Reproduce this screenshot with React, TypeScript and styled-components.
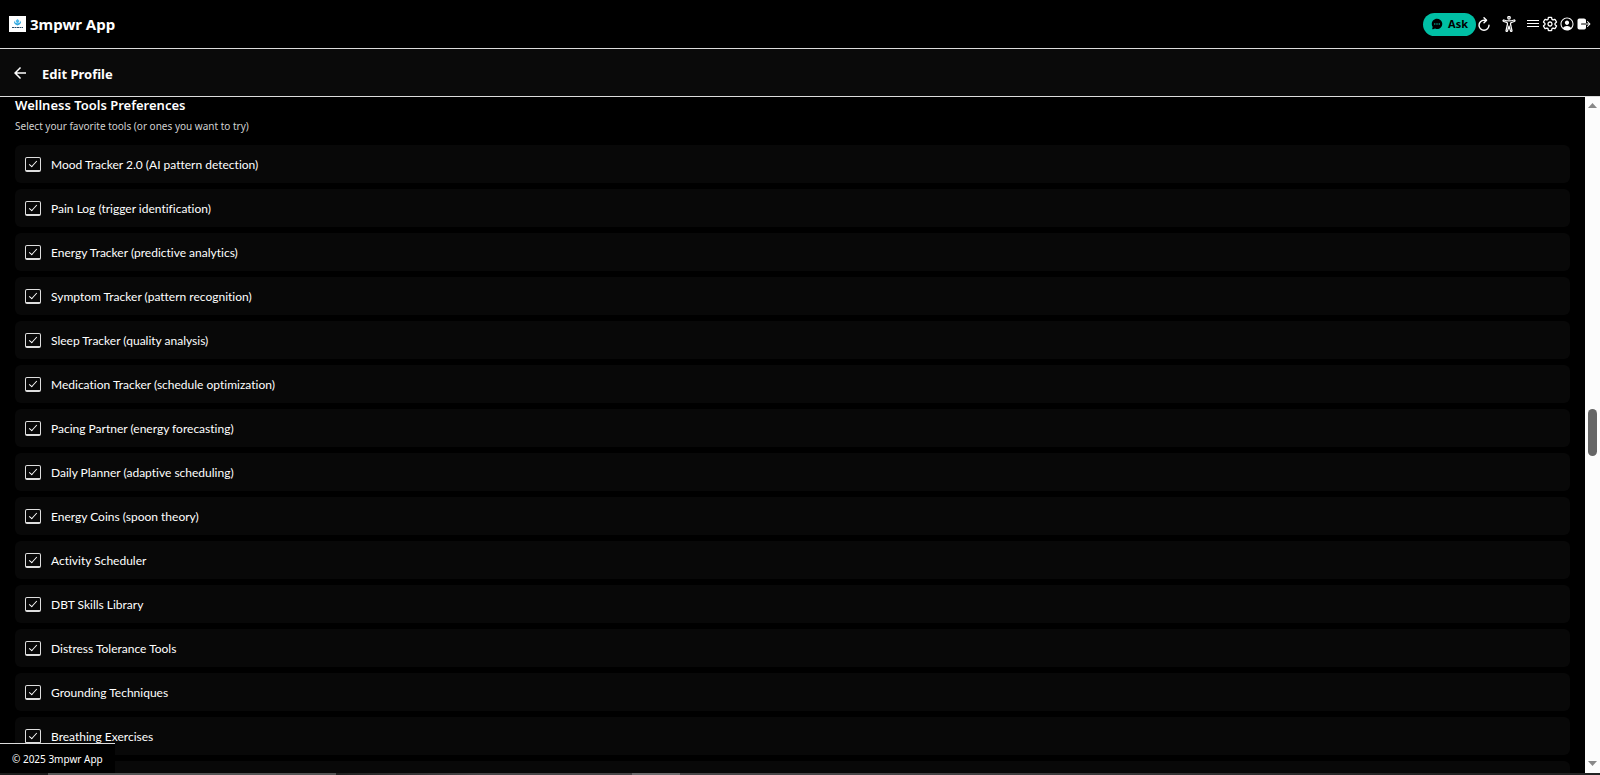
import React from 'react';
import styled, { createGlobalStyle } from 'styled-components';
import {
  IoAccessibilityOutline,
  IoChatbubbleEllipses,
  IoLogOut,
  IoPersonCircleOutline,
  IoRefreshOutline,
  IoSettingsOutline,
} from 'react-icons/io5';
import { MdArrowBack } from 'react-icons/md';

const line = '#dcdcdc';

const GlobalStyle = createGlobalStyle`
  *, *::before, *::after { box-sizing: border-box; }
  body {
    margin: 0;
    background: #000;
    color: #fff;
    font: 12px/16px 'Noto Sans', sans-serif;
  }
  button { font: inherit; color: inherit; border: 0; padding: 0; background: none; cursor: pointer; }
`;

const Page = styled.div`
  display: flex;
  flex-direction: column;
  height: 100vh;
  overflow: hidden;
`;

const TopBar = styled.header`
  display: flex;
  flex: none;
  align-items: center;
  justify-content: space-between;
  height: 49px;
  padding: 0 8px 0 9px;
  border-bottom: 1px solid ${line};
`;

const Brand = styled.a`
  display: flex;
  align-items: center;
  gap: 4px;
  color: inherit;
  text-decoration: none;
  font-size: 15px;
  font-weight: 700;
  line-height: 20px;
`;

const Actions = styled.nav`
  display: flex;
  align-items: center;
`;

const AskButton = styled.button`
  display: flex;
  align-items: center;
  justify-content: center;
  gap: 5px;
  width: 53px;
  height: 23px;
  border-radius: 12px;
  background: #00bfa5;
  color: #000;
  font-size: 11px;
  font-weight: 700;
`;

const IconButton = styled.button`
  display: flex;
  align-items: center;
  justify-content: center;
`;

const AccessButton = styled(IconButton)`
  margin: 0 8px 0 9px;
`;

const IconGroup = styled.div`
  display: flex;
  gap: 1px;
`;

const SettingsIcon = styled(IoSettingsOutline)`
  path {
    stroke-width: 42px;
  }
`;

const RefreshIcon = styled(IoRefreshOutline)`
  path {
    stroke-width: 46px;
  }
`;

const AccessIcon = styled(IoAccessibilityOutline)`
  path,
  circle {
    stroke-width: 40px;
  }
`;

const TitleBar = styled.div`
  display: flex;
  flex: none;
  align-items: center;
  gap: 13px;
  height: 48px;
  padding: 0 11px;
  background: #0a0a0a;
  border-bottom: 1px solid ${line};
`;

const PageTitle = styled.h1`
  margin: 2px 0 0;
  font-size: 13px;
  font-weight: 700;
  line-height: 20px;
`;

const Body = styled.div`
  display: flex;
  flex: 1;
  min-height: 0;
`;

const Content = styled.main`
  flex: 1;
  min-width: 0;
  padding: 0 15px;
  overflow: hidden;
`;

const SectionTitle = styled.h2`
  margin: 0;
  font-size: 13px;
  font-weight: 600;
  line-height: 16px;
`;

const Hint = styled.p`
  margin: 5px 0 11px;
  color: #d0d0d0;
  font-size: 10px;
  line-height: 16px;
`;

const ToolList = styled.ul`
  display: flex;
  flex-direction: column;
  gap: 6px;
  margin: 0;
  padding: 0;
  list-style: none;
`;

const ToolRow = styled.li`
  height: 38px;
  border-radius: 6px;
  background: #080808;
`;

const ToolLabel = styled.label`
  display: flex;
  gap: 10px;
  padding: 12px 10px;
  font-family: Lato, 'Noto Sans', sans-serif;
  font-variant-ligatures: none;
  line-height: 16px;
`;

const CheckBox = styled.input`
  appearance: none;
  position: relative;
  width: 16px;
  height: 15px;
  margin: 0;
  border: 1px solid #dedede;
  border-bottom-width: 2px;
  border-radius: 2px;

  &:checked::after {
    content: '';
    position: absolute;
    left: 5px;
    top: 1px;
    width: 4px;
    height: 8px;
    border: solid #fff;
    border-width: 0 1px 1px 0;
    transform: rotate(42deg);
  }
`;

const ScrollBar = styled.div`
  display: flex;
  flex: none;
  flex-direction: column;
  align-items: center;
  width: 15px;
  padding: 6px 0 7px;
  background: #fcfcfc;
`;

const Gap = styled.div<{ $share: number }>`
  flex: ${(p) => p.$share};
`;

const Thumb = styled.div`
  width: 9px;
  height: 47px;
  border-radius: 5px;
  background: #666;
`;

const Copyright = styled.footer`
  position: fixed;
  left: 0;
  bottom: 2px;
  height: 30px;
  padding: 7px 12px;
  border-top: 1px solid ${line};
  background: #000;
  font-size: 10px;
  line-height: 16px;
`;

const BottomEdge = styled.div`
  display: flex;
  flex: none;
  height: 2px;
  background: linear-gradient(90deg, #1c1c1c 20%, #484648 30%, #484648 55%, #222 90%);
`;

const EdgeSegment = styled.div<{ $start: string; $width: string; $color: string }>`
  width: ${(p) => p.$width};
  margin-left: ${(p) => p.$start};
  background: ${(p) => p.$color};
`;

const tools = [
  'Mood Tracker 2.0 (AI pattern detection)',
  'Pain Log (trigger identification)',
  'Energy Tracker (predictive analytics)',
  'Symptom Tracker (pattern recognition)',
  'Sleep Tracker (quality analysis)',
  'Medication Tracker (schedule optimization)',
  'Pacing Partner (energy forecasting)',
  'Daily Planner (adaptive scheduling)',
  'Energy Coins (spoon theory)',
  'Activity Scheduler',
  'DBT Skills Library',
  'Distress Tolerance Tools',
  'Grounding Techniques',
  'Breathing Exercises',
];

function MenuIcon({ size }: { size: number }) {
  return (
    <svg width={size} height={size} viewBox="0 0 16 16" aria-hidden="true">
      <path d="M2 4.500H14M2 7.500H14M2 10.500H14" stroke="currentColor" />
    </svg>
  );
}

const shortcuts = [
  { name: 'Menu', Icon: MenuIcon },
  { name: 'Settings', Icon: SettingsIcon },
  { name: 'Account', Icon: IoPersonCircleOutline },
  { name: 'Log out', Icon: IoLogOut },
];

function Logo() {
  return (
    <svg width="17" height="16" viewBox="0 0 17 16" aria-hidden="true">
      <rect width="17" height="16" fill="#fff" />
      <path d="M5 4.5C4.5 7 6 9 8.500 9.500C11 9 12.500 7 12 4.500C11.500 6 10.500 7 8.500 7.500C6.500 7 5.500 6 5 4.500Z" fill="#31a8e0" />
      <path d="M8.500 3L10.500 5L8.500 8L6.500 5Z" fill="#4ab8ea" />
      <path d="M3 11.500H14" stroke="#274a68" strokeDasharray="2 0.500" />
    </svg>
  );
}

function ScrollArrow({ down = false }: { down?: boolean }) {
  return (
    <svg width="9" height="5" viewBox="0 0 9 5" aria-hidden="true">
      <path d={down ? 'M0 0H9L4.500 5Z' : 'M0 5H9L4.500 0Z'} fill="#888" />
    </svg>
  );
}

export default function App() {
  return (
    <Page>
      <GlobalStyle />
      <TopBar>
        <Brand href="#">
          <Logo />
          3mpwr App
        </Brand>
        <Actions>
          <AskButton>
            <IoChatbubbleEllipses size={12} />
            Ask
          </AskButton>
          <IconButton aria-label="Reload">
            <RefreshIcon size={16} />
          </IconButton>
          <AccessButton aria-label="Accessibility">
            <AccessIcon size={16} />
          </AccessButton>
          <IconGroup>
            {shortcuts.map(({ name, Icon }) => (
              <IconButton key={name} aria-label={name}>
                <Icon size={16} />
              </IconButton>
            ))}
          </IconGroup>
        </Actions>
      </TopBar>
      <TitleBar>
        <IconButton aria-label="Back">
          <MdArrowBack size={18} />
        </IconButton>
        <PageTitle>Edit Profile</PageTitle>
      </TitleBar>
      <Body>
        <Content>
          <SectionTitle>Wellness Tools Preferences</SectionTitle>
          <Hint>Select your favorite tools (or ones you want to try)</Hint>
          <ToolList>
            {tools.map((tool) => (
              <ToolRow key={tool}>
                <ToolLabel>
                  <CheckBox type="checkbox" defaultChecked />
                  {tool}
                </ToolLabel>
              </ToolRow>
            ))}
            <ToolRow aria-hidden="true" />
          </ToolList>
        </Content>
        <ScrollBar aria-hidden="true">
          <ScrollArrow />
          <Gap $share={199} />
          <Thumb />
          <Gap $share={201} />
          <ScrollArrow down />
        </ScrollBar>
      </Body>
      <Copyright>© 2025 3mpwr App</Copyright>
      <BottomEdge>
        <EdgeSegment $start="3%" $width="18%" $color="#555" />
        <EdgeSegment $start="18.5%" $width="3%" $color="#6e6c6e" />
      </BottomEdge>
    </Page>
  );
}
